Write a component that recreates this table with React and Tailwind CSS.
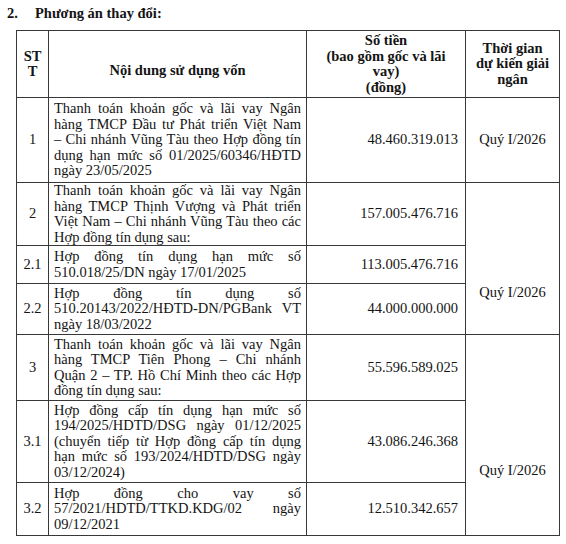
const rows = [
  {
    stt: '1',
    h: 'h-[85px]',
    lines: [
      'Thanh toán khoản gốc và lãi vay Ngân',
      'hàng TMCP Đầu tư Phát triển Việt Nam',
      '– Chi nhánh Vũng Tàu theo Hợp đồng tín',
      'dụng hạn mức số 01/2025/60346/HĐTD',
      'ngày 23/05/2025',
    ],
    amount: '48.460.319.013',
    time: { span: 1, pad: 'align-middle' },
  },
  {
    stt: '2',
    h: 'h-[63px]',
    lines: [
      'Thanh toán khoản gốc và lãi vay Ngân',
      'hàng TMCP Thịnh Vượng và Phát triển',
      'Việt Nam – Chi nhánh Vũng Tàu theo các',
      'Hợp đồng tín dụng sau:',
    ],
    amount: '157.005.476.716',
    time: { span: 3, pad: 'align-top pt-[102px]' },
  },
  {
    stt: '2.1',
    h: 'h-[38px]',
    lines: ['Hợp đồng tín dụng hạn mức số', '510.018/25/DN ngày 17/01/2025'],
    amount: '113.005.476.716',
    time: null,
  },
  {
    stt: '2.2',
    h: 'h-[51px]',
    lines: ['Hợp đồng tín dụng số', '510.20143/2022/HĐTD-DN/PGBank VT', 'ngày 18/03/2022'],
    amount: '44.000.000.000',
    time: null,
  },
  {
    stt: '3',
    h: 'h-[66px]',
    lines: [
      'Thanh toán khoản gốc và lãi vay Ngân',
      'hàng TMCP Tiên Phong – Chi nhánh',
      'Quận 2 – TP. Hồ Chí Minh theo các Hợp',
      'đồng tín dụng sau:',
    ],
    amount: '55.596.589.025',
    time: { span: 3, pad: 'align-top pt-[128px]' },
  },
  {
    stt: '3.1',
    h: 'h-[82px]',
    lines: [
      'Hợp đồng cấp tín dụng hạn mức số',
      '194/2025/HDTD/DSG ngày 01/12/2025',
      '(chuyển tiếp từ Hợp đồng cấp tín dụng',
      'hạn mức số 193/2024/HDTD/DSG ngày',
      '03/12/2024)',
    ],
    amount: '43.086.246.368',
    time: null,
  },
  {
    stt: '3.2',
    h: 'h-[53px]',
    lines: ['Hợp đồng cho vay số', '57/2021/HDTD/TTKD.KDG/02 ngày', '09/12/2021'],
    amount: '12.510.342.657',
    time: null,
  },
]

const cell = 'border border-[#383838] p-0'

function Content({ lines }) {
  return (
    <div className="px-[5px]">
      {lines.map((line, i) => (
        <div
          key={i}
          className={
            i < lines.length - 1
              ? 'whitespace-nowrap text-justify [text-align-last:justify]'
              : 'whitespace-nowrap text-left'
          }
        >
          {line}
        </div>
      ))}
    </div>
  )
}

export default function App() {
  return (
    <div className="w-[566px] h-[544px] bg-white text-[#141414] font-['Liberation_Serif','Times_New_Roman',serif] text-[14.5px] leading-[15.5px] pt-[5px]">
      <div className="flex font-bold pl-[7px] h-[17px] items-center">
        <span className="w-[28px]">2.</span>
        <span>Phương án thay đổi:</span>
      </div>

      <table className="ml-[16px] mt-[8px] border-collapse table-fixed w-[543px]">
        <colgroup>
          <col className="w-[32px]" />
          <col className="w-[258px]" />
          <col className="w-[159px]" />
          <col className="w-[94px]" />
        </colgroup>
        <thead>
          <tr className="h-[67px] font-bold text-center">
            <th className={cell}>
              ST
              <br />T
            </th>
            <th className={cell}>
              <div className="pt-[14px]">Nội dung sử dụng vốn</div>
            </th>
            <th className={cell}>
              Số tiền
              <br />
              (bao gồm gốc và lãi
              <br />
              vay)
              <br />
              (đồng)
            </th>
            <th className={cell}>
              Thời gian
              <br />
              dự kiến giải
              <br />
              ngân
            </th>
          </tr>
        </thead>
        <tbody>
          {rows.map((r) => (
            <tr key={r.stt} className={r.h}>
              <td className={`${cell} text-center`}>{r.stt}</td>
              <td className={cell}>
                <Content lines={r.lines} />
              </td>
              <td className={`${cell} text-right pr-[7px]`}>{r.amount}</td>
              {r.time && (
                <td className={`${cell} text-center ${r.time.pad}`} rowSpan={r.time.span}>
                  Quý I/2026
                </td>
              )}
            </tr>
          ))}
        </tbody>
      </table>
    </div>
  )
}
